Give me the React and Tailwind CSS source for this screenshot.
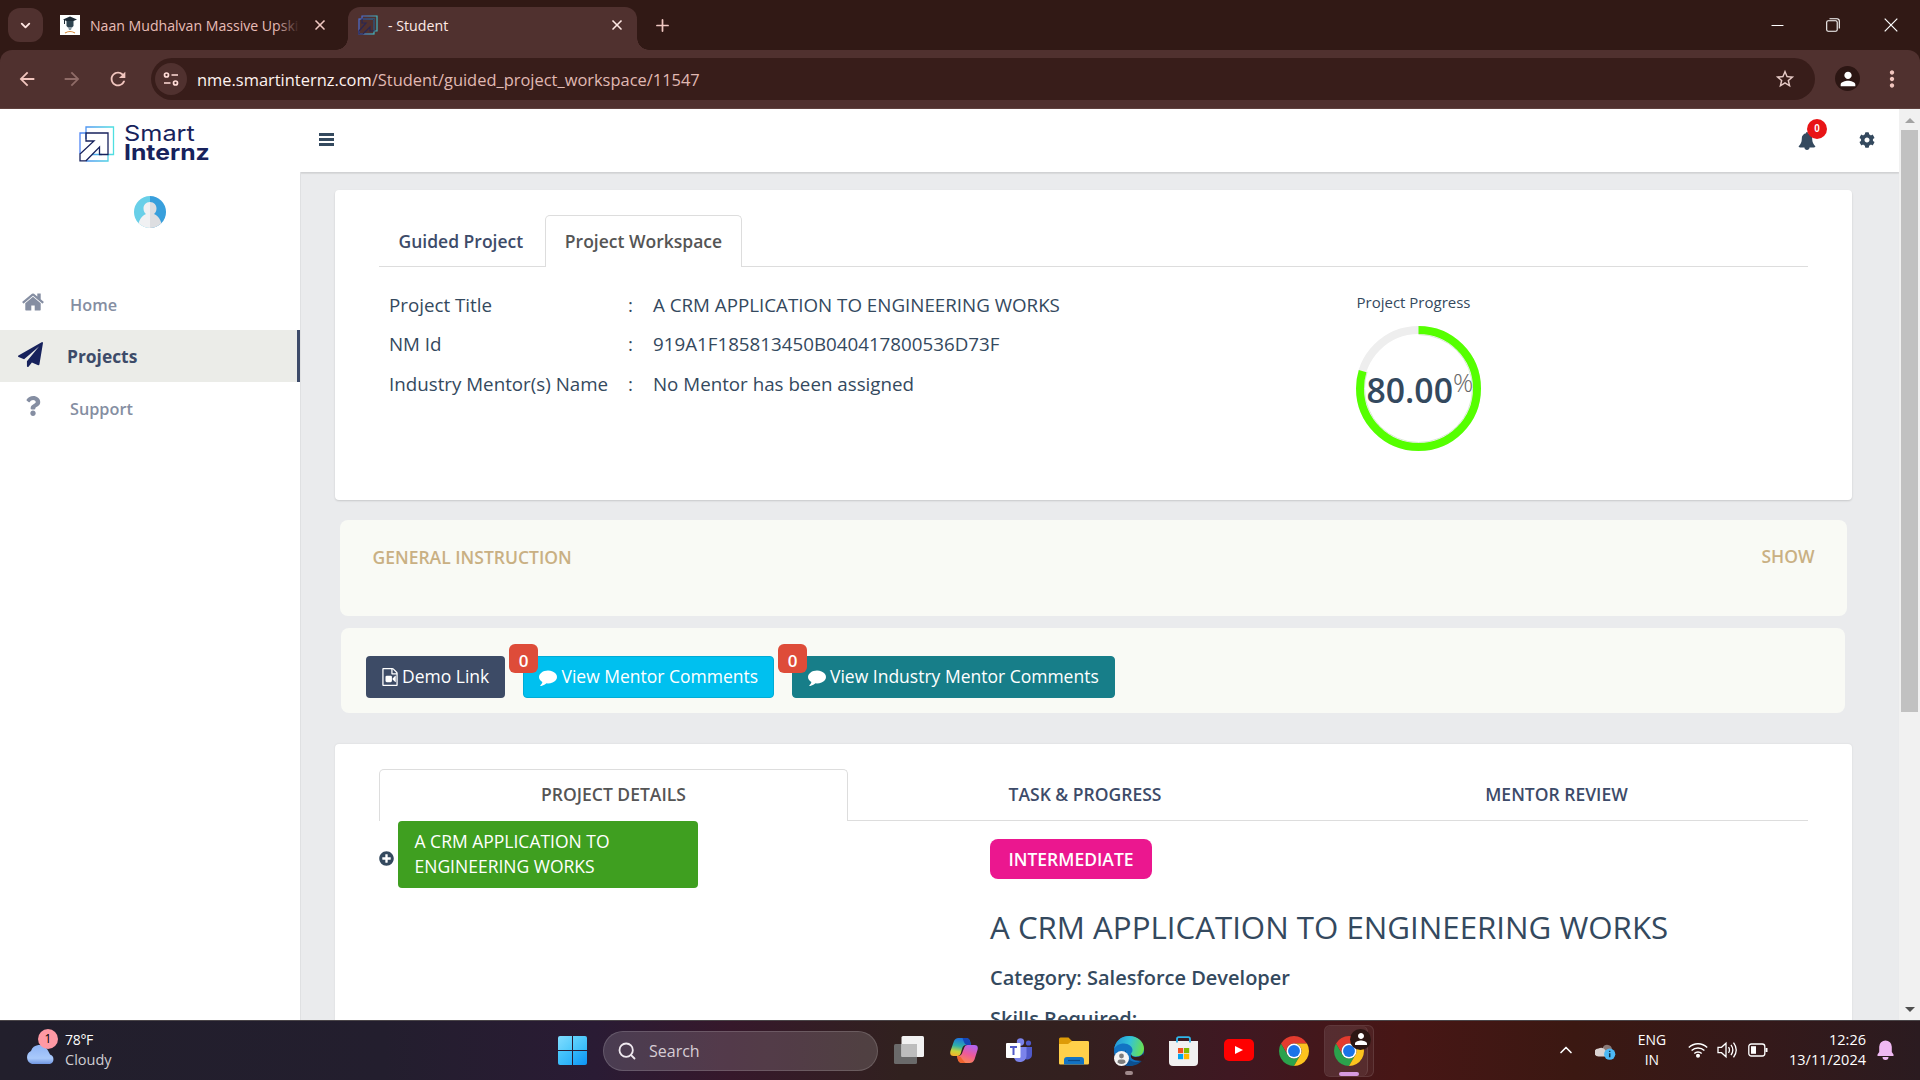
import React from 'react';
import { MdStarBorder, MdPerson, MdArrowBack, MdArrowForward, MdRefresh, MdMoreVert } from 'react-icons/md';
import { FaCog, FaQuestion, FaPlusCircle } from 'react-icons/fa';
import { X, Plus, ChevronDown, ChevronUp, Search, Minus } from 'lucide-react';

const paths = {
  home: 'M1472 992v480q0 26-19 45t-45 19h-384v-384h-256v384h-384q-26 0-45-19t-19-45v-480q0-1 .5-3t.5-3l575-474 575 474q1 2 1 6zm223-69l-62 74q-8 9-21 11h-3q-13 0-21-7l-692-577-692 577q-12 8-24 7-13-2-21-11l-62-74q-8-10-7-23.5t11-21.5l719-599q32-26 76-26t76 26l244 204v-195q0-14 9-23t23-9h192q14 0 23 9t9 23v408l219 182q10 8 11 21.5t-7 23.5z',
  plane: 'M1764 11q33 24 27 64l-256 1536q-5 29-32 45-14 8-31 8-11 0-24-5l-453-185-242 295q-18 23-49 23-13 0-22-4-19-7-30.500-23.500t-11.500-36.500v-349l864-1059-1069 925-395-162q-37-14-40-55-2-40 32-59l1664-960q15-9 32-9 20 0 36 11z',
  comment: 'M1792 896q0 174-120 321.500t-326 233-450 85.500q-70 0-145-8-198 175-460 242-49 14-114 22-17 2-30.500-9t-17.500-29v-1q-3-4-.5-12t2-10 4.500-9.500l6-9 7-8.500 8-9q7-8 31-34.500t34.500-38 31-39.500 32.500-51 27-59 26-76q-157-89-247.500-220t-90.500-281q0-130 71-248.500t191-204.500 286-136.500 348-50.500q244 0 450 85.500t326 233 120 321.500z',
  bell: 'M1728 1408q0 52-38 90t-90 38h-448q0 106-75 181t-181 75-181-75-75-181h-448q-52 0-90-38t-38-90q50-42 91-88t85-119.500 74.500-158.500 50-206 19.500-260q0-152 117-282.500t307-158.500q-8-19-8-39 0-40 28-68t68-28 68 28 28 68q0 20-8 39 190 28 307 158.500t117 282.500q0 139 19.500 260t50 206 74.500 158.500 85 119.500 91 88z',
  video: 'M1596 380q28 28 48 76t20 88v1152q0 40-28 68t-68 28h-1344q-40 0-68-28t-28-68v-1600q0-40 28-68t68-28h896q40 0 88 20t76 48zm-444-244v376h376q-10-29-22-41l-313-313q-12-12-41-22zm384 1528v-1024h-416q-40 0-68-28t-28-68v-416h-768v1536h1280zm-576-896q52 0 90 38t38 90v384q0 52-38 90t-90 38h-384q-52 0-90-38t-38-90v-384q0-52 38-90t90-38h384zm492 2q20 8 20 30v576q0 22-20 30-8 2-12 2-14 0-23-9l-265-266v-90l265-266q9-9 23-9 4 0 12 2z',
};

function Fa({ name, className }) {
  return (
    <svg viewBox="0 0 1792 1792" className={className} fill="currentColor">
      <path d={paths[name]} />
    </svg>
  );
}

/* ---------- Browser frame ---------- */

function TabStrip() {
  return (
    <div className="flex h-[50px] items-start bg-[#311915]">
      <button className="mt-2 ml-2 flex h-[34px] w-[35px] items-center justify-center rounded-xl bg-[#50312f]">
        <ChevronDown className="size-[15px] text-[#ffe6e2]" strokeWidth={3} />
      </button>
      <div className="ml-[17px] flex h-[50px] w-[288px] items-center">
        <svg viewBox="0 0 20 20" className="size-5 shrink-0">
          <rect width="20" height="20" fill="#fff" />
          <path d="M3 4.500 10 1.500l7 3-7 3z" fill="#1d2b36" />
          <path d="M6.500 6h7v5l-1.500 1.500h-4L6.500 11z" fill="#2f4450" />
          <path d="M4.500 5v4" stroke="#1d2b36" strokeWidth="1" />
          <path d="M8 12h4l-1 3h-2z" fill="#8b9aa3" />
          <path d="M5 18q5-3 10 0" stroke="#d58a3d" strokeWidth="1.200" fill="none" />
        </svg>
        <div className="relative mt-[2px] ml-[10px] h-6 w-[210px] overflow-hidden text-[14.100px] leading-6 whitespace-nowrap text-[#e8bdb7]">
          Naan Mudhalvan Massive Upski
          <span className="absolute inset-y-0 right-0 w-6 bg-linear-to-r from-transparent to-[#311915]" />
        </div>
        <X className="ml-[12px] size-[16px] text-[#f0c8c2]" strokeWidth={2.500} />
      </div>
      <div className="relative mt-[7px] flex h-[43px] w-[289px] items-center rounded-t-xl bg-[#50312f] pb-[7px]">
        <span className="absolute bottom-0 -left-3 size-3 bg-[radial-gradient(circle_at_0_0,transparent_11.500px,#50312f_12px)]" />
        <span className="absolute -right-3 bottom-0 size-3 bg-[radial-gradient(circle_at_100%_0,transparent_11.500px,#50312f_12px)]" />
        <svg viewBox="0 0 20 20" className="ml-[10px] size-5 shrink-0" fill="none">
          <defs>
            <linearGradient id="favGrad" x1="0" x2="1">
              <stop offset="0" stopColor="#4b6bd0" />
              <stop offset="1" stopColor="#43b5bd" />
            </linearGradient>
          </defs>
          <rect x="1" y="4" width="15" height="15" stroke="url(#favGrad)" strokeWidth="1.200" />
          <path d="M4 4V1h15v15h-3" stroke="url(#favGrad)" strokeWidth="1.200" />
          <path d="M4 4h12v12h-4v-4l-7 7H1v-3l7-8H4z" stroke="#2a2752" strokeWidth="1.200" />
        </svg>
        <span className="mt-[2px] ml-[10px] w-[221px] text-[14.200px] leading-6 text-[#ffeae6]">- Student</span>
        <X className="size-[16px] text-[#ffe9e5]" strokeWidth={2.500} />
      </div>
      <Plus className="mt-4 ml-4 size-[19px] text-[#f0c8c2]" strokeWidth={2.200} />
      <div className="ml-auto flex h-[50px] items-center text-white">
        <Minus className="mr-[39px] size-[19px]" strokeWidth={1.400} />
        <svg viewBox="0 0 14 14" className="mr-[44px] size-[14px]" fill="none" stroke="currentColor" strokeWidth="1.100">
          <rect x="0.700" y="2.700" width="10.500" height="10.500" rx="1.500" />
          <path d="M3.500.7h7.500q2.300 0 2.300 2.300v7.500" />
        </svg>
        <svg viewBox="0 0 14 14" className="mr-[22px] size-[14px]" stroke="currentColor" strokeWidth="1.200">
          <path d="M.7.7l12.600 12.600M13.300.7L.7 13.300" />
        </svg>
      </div>
    </div>
  );
}

function Toolbar() {
  return (
    <div className="h-[59px] bg-[#311915]">
      <div className="flex h-[59px] items-center rounded-t-xl border-b border-[#5f413e] bg-[#50312f] pb-px text-[#f1c5be]">
        <MdArrowBack className="ml-[16px] size-[22px]" />
        <MdArrowForward className="ml-[23px] size-[22px] text-[#8f6b67]" />
        <MdRefresh className="ml-[24px] size-[22px]" />
        <div className="ml-[22px] flex h-[42px] w-[1664px] items-center rounded-full bg-[#381d1a] text-[16.450px]">
          <span className="ml-[4px] flex size-[32px] items-center justify-center rounded-full bg-[#50312f]">
            <svg viewBox="0 0 16 16" className="size-4 text-[#ffdcd7]" fill="none" stroke="currentColor" strokeWidth="1.700">
              <circle cx="3.500" cy="4" r="2" />
              <path d="M8.500 4H15M1 12h6.500" />
              <circle cx="12.500" cy="12" r="2" />
            </svg>
          </span>
          <span className="mt-[2px] ml-[10px] leading-6 text-[#e0b9b3]">
            <span className="text-[#fff3f0]">nme.smartinternz.com</span>/Student/guided_project_workspace/11547
          </span>
          <MdStarBorder className="mr-[19px] ml-auto size-[22px] text-[#e6cac6]" />
        </div>
        <span className="ml-[20px] flex size-[25px] items-center justify-center rounded-full bg-[#2c1613]">
          <MdPerson className="size-[22px] text-white" />
        </span>
        <MdMoreVert className="ml-[19px] size-[26px]" />
      </div>
    </div>
  );
}

/* ---------- Page ---------- */

function Logo() {
  return (
    <div className="flex items-start text-[#17225c]">
      <svg viewBox="0 0 36 36" className="size-9" fill="none" strokeWidth="1.300">
        <defs>
          <linearGradient id="logoGrad" gradientUnits="userSpaceOnUse" x1="0" x2="36" y1="18" y2="18">
            <stop offset="0" stopColor="#4f83f5" />
            <stop offset="1" stopColor="#4fe3e0" />
          </linearGradient>
        </defs>
        <path d="M7 7V1h27.500v27.500H29M7 7v6M23 28.500H13" stroke="url(#logoGrad)" />
        <path d="M7 7H1v21M7 35h22v-7" stroke="url(#logoGrad)" />
        <path d="M7 7h22v21.500h-8.500V21L7 34.800H1V28l14-13H7z" stroke="currentColor" />
      </svg>
      <div className="-mt-[2px] ml-[9px] font-['Inter',sans-serif] leading-[19px]">
        <div className="w-[64px] origin-left scale-x-[1.150] text-[22px] font-normal">Smart</div>
        <div className="w-[76px] origin-left scale-x-[1.150] text-[21.500px] font-bold">Internz</div>
      </div>
    </div>
  );
}

function Avatar() {
  return (
    <svg viewBox="0 0 32 32" className="size-8">
      <defs>
        <clipPath id="avatarClip">
          <circle cx="16" cy="16" r="16" />
        </clipPath>
      </defs>
      <g clipPath="url(#avatarClip)">
        <rect width="16" height="32" fill="#68cfe8" />
        <rect x="16" width="16" height="32" fill="#389fdc" />
        <path d="M16 6c-4.200 0-6.500 3-6.500 6.500 0 2.500 1 4.300 2.500 5.500C8 20 4.500 23 4 32h12z" fill="#f0f1f3" />
        <path d="M16 6c4.200 0 6.500 3 6.500 6.500 0 2.500-1 4.300-2.500 5.500 4 2 7.500 5 8 14H16z" fill="#dddee1" />
      </g>
    </svg>
  );
}

function Sidebar() {
  return (
    <aside className="flex w-[300px] shrink-0 flex-col bg-white text-[16.250px] font-semibold text-[#858ea2]">
      <div className="mt-[17px] ml-[79px] h-9">
        <Logo />
      </div>
      <div className="mt-[34px] flex justify-center">
        <Avatar />
      </div>
      <a className="mt-[49px] flex h-[53px] items-center">
        <Fa name="home" className="-mt-[4px] ml-[21px] size-[24px]" />
        <span className="mt-[4px] ml-[25px]">Home</span>
      </a>
      <a className="flex h-[52px] items-center border-r-[3px] border-[#3d4b69] bg-[#ebece8] text-[17.400px] font-bold text-[#3d4b69]">
        <Fa name="plane" className="-mt-[4px] ml-[18px] size-[25px] text-[#17225c]" />
        <span className="ml-[24px]">Projects</span>
      </a>
      <a className="flex h-[53px] items-center">
        <FaQuestion className="-mt-[6px] ml-[23px] size-[20px]" />
        <span className="mt-[1px] ml-[27px]">Support</span>
      </a>
    </aside>
  );
}

function Header() {
  return (
    <header className="flex h-[63px] shrink-0 items-center bg-white text-[#34495e] shadow-[0_1px_2px_rgba(0,0,0,0.1)]">
      <div className="mb-[2px] ml-[19px] flex w-[15px] flex-col gap-[2px]">
        <span className="h-[3px] bg-current" />
        <span className="h-[3px] bg-current" />
        <span className="h-[3px] bg-current" />
      </div>
      <div className="relative mr-[43px] ml-auto">
        <Fa name="bell" className="size-[18px]" />
        <span className="absolute -top-[13px] left-[9px] flex size-5 items-center justify-center rounded-full bg-[#e81416] font-['Liberation_Sans',sans-serif] text-[10px] font-bold text-white">
          0
        </span>
      </div>
      <FaCog className="mr-[24px] mb-px size-[16px]" />
    </header>
  );
}

const details = [
  ['Project Title', 'A CRM APPLICATION TO ENGINEERING WORKS'],
  ['NM Id', '919A1F185813450B040417800536D73F'],
  ['Industry Mentor(s) Name', 'No Mentor has been assigned'],
];

function ProgressRing() {
  return (
    <div className="mt-[12px] -ml-px size-[125px] relative">
      <svg viewBox="0 0 125 125" className="size-full -rotate-90" fill="none" strokeWidth="8">
        <circle cx="62.500" cy="62.500" r="58.500" stroke="#eeeeee" />
        <circle cx="62.500" cy="62.500" r="54" stroke="#d9ead2" strokeWidth="1" pathLength="100" strokeDasharray="80 100" />
        <circle cx="62.500" cy="62.500" r="58.500" stroke="#55ff00" pathLength="100" strokeDasharray="79.800 100" />
      </svg>
      <div className="absolute inset-0 flex pl-[11px]">
        <span className="mt-[43px] text-[33.750px] leading-[42px] font-semibold text-[#34495e]">80.00</span>
        <span className="mt-[41px] text-[25px] leading-[30px] font-light text-[#666]">%</span>
      </div>
    </div>
  );
}

function WorkspaceCard() {
  return (
    <section className="mt-[18px] mr-[47px] ml-[35px] h-[310px] shrink-0 rounded bg-white shadow-[0_1px_2px_rgba(0,0,0,0.15)]">
      <nav className="mt-[25px] mr-[44px] ml-[44px] flex h-[52px] border-b border-[#ddd] text-[17.500px] font-semibold">
        <a className="w-[166px] pl-[19.500px] leading-[52px] text-[#3d4b69]">Guided Project</a>
        <a className="-mb-px h-[52px] w-[197px] rounded-t-[5px] border border-b-0 border-[#ddd] bg-white text-center leading-[51px] text-[#555]">
          Project Workspace
        </a>
      </nav>
      <div className="flex">
        <dl className="mt-[18px] ml-[54px] w-[967.500px] text-[18.750px] text-[#34495e]">
          {details.map(([label, value]) => (
            <div key={label} className="flex h-[39.500px] items-center">
              <dt className="w-[239px]">{label}</dt>
              <dd className="w-[25px]">:</dd>
              <dd>{value}</dd>
            </div>
          ))}
        </dl>
        <div className="mt-[24px] text-[15px] text-[#34495e]">
          <div className="leading-[23px]">Project Progress</div>
          <ProgressRing />
        </div>
      </div>
    </section>
  );
}

function Instructions() {
  return (
    <section className="mt-[20px] mr-[52px] ml-[40px] flex h-[96px] shrink-0 justify-between rounded-lg bg-[#f9faf5] px-[32.500px] text-[17.500px] leading-[25px] font-semibold text-[#c9b083]">
      <span className="mt-[25px]">GENERAL INSTRUCTION</span>
      <span className="mt-[24px]">SHOW</span>
    </section>
  );
}

function CountBadge() {
  return (
    <span className="absolute -top-[13px] -left-[15px] flex h-[29px] w-[29px] items-center justify-center rounded-md bg-[#de4c39] pt-[4px] text-[17px] font-semibold">
      0
    </span>
  );
}

function Actions() {
  return (
    <section className="mt-[12px] mr-[54px] ml-[41px] flex h-[85px] shrink-0 items-start rounded-lg bg-[#f9faf5] pt-[28px] pl-[25px] text-[17.500px] whitespace-nowrap text-white">
      <a className="flex h-[42px] w-[139px] items-center rounded bg-[#3d4b66] pl-[15px]">
        <Fa name="video" className="size-[18px]" />
        <span className="ml-[3px] pb-[2px]">Demo Link</span>
      </a>
      <a className="relative ml-[18px] flex h-[42px] w-[251px] items-center rounded border border-[#00acd6] bg-[#00c0ef] pl-[15px]">
        <CountBadge />
        <Fa name="comment" className="size-[18px]" />
        <span className="ml-[4.500px] pb-[2px]">View Mentor Comments</span>
      </a>
      <a className="relative ml-[18px] flex h-[42px] w-[323px] items-center rounded border border-[#177e89] bg-[#177e89] pl-[15px]">
        <CountBadge />
        <Fa name="comment" className="size-[18px]" />
        <span className="ml-[4px] pb-[2px]">View Industry Mentor Comments</span>
      </a>
    </section>
  );
}

function DetailsCard() {
  return (
    <section className="mt-[31px] mr-[47px] ml-[35px] h-[380px] shrink-0 rounded-t bg-white px-[44px] pt-[25px] text-[#34495e] shadow-[0_0_2px_rgba(0,0,0,0.1)]">
      <nav className="flex h-[52px] gap-[3px] border-b border-[#ddd] text-center text-[17.500px] leading-[51px] font-semibold text-[#3d4b69]">
        <a className="-mb-px h-[52px] w-[469px] rounded-t-[5px] border border-b-0 border-[#ddd] bg-white leading-[49px] text-[#555]">PROJECT DETAILS</a>
        <a className="w-[468px]">TASK &amp; PROGRESS</a>
        <a className="w-[469px]">MENTOR REVIEW</a>
      </nav>
      <div className="flex items-start">
        <FaPlusCircle className="mt-[30px] size-[15px]" />
        <div className="ml-[4px] h-[67px] w-[300px] rounded bg-[#3f9f20] pt-[8px] pl-[16.500px] text-[17.500px] leading-[25px] text-white">
          A CRM APPLICATION TO
          <br />
          ENGINEERING WORKS
        </div>
        <div className="ml-[292px] font-semibold">
          <div className="mt-[18px] h-[40px] w-[162px] rounded-lg bg-[#eb178f] text-center text-[17.500px] leading-[40px] text-white">
            INTERMEDIATE
          </div>
          <h2 className="mt-[27px] text-[31.250px] leading-[42px] font-normal">A CRM APPLICATION TO ENGINEERING WORKS</h2>
          <div className="mt-[15px] text-[20px] leading-[30px]">Category: Salesforce Developer</div>
          <div className="mt-[11px] text-[20px] leading-[30px]">Skills Required:</div>
        </div>
      </div>
    </section>
  );
}

function Scrollbar() {
  return (
    <div className="flex w-[21px] shrink-0 flex-col items-center bg-[#f1f1f1]">
      <span className="mt-[9px] border-x-[5px] border-b-[5px] border-x-transparent border-b-[#a3a3a3]" />
      <span className="mt-[7px] h-[582px] w-[17px] bg-[#c1c1c1]" />
      <span className="mt-auto mb-[8px] border-x-[5px] border-t-[5px] border-x-transparent border-t-[#505050]" />
    </div>
  );
}

/* ---------- Taskbar ---------- */

function ChromeIcon() {
  return (
    <svg viewBox="2 2 44 44" className="size-[30px]">
      <path d="M24 13H43.050A22 22 0 0 0 4.950 13L14.470 29.500A11 11 0 0 1 24 13z" fill="#e33b2e" />
      <path d="M14.470 29.500L4.950 13A22 22 0 0 0 24 46L33.530 29.500A11 11 0 0 1 14.470 29.500z" fill="#2ba24c" />
      <path d="M33.530 29.500L24 46A22 22 0 0 0 43.050 13H24A11 11 0 0 1 33.530 29.500z" fill="#fcc31e" />
      <circle cx="24" cy="24" r="11" fill="#fff" />
      <circle cx="24" cy="24" r="8.700" fill="#1a73e8" />
    </svg>
  );
}

function WeatherIcon() {
  return (
    <div className="relative h-[34px] w-[34px]">
      <svg viewBox="0 0 34 34" className="size-full">
        <defs>
          <linearGradient id="cloud" x1="0" x2="0" y1="0" y2="1">
            <stop offset="0" stopColor="#8fb4f5" />
            <stop offset="0.700" stopColor="#a9c9fb" />
            <stop offset="1" stopColor="#6f95e0" />
          </linearGradient>
        </defs>
        <path d="M8 30a7 7 0 0 1-1-13 9 9 0 0 1 16-2q3 5 3 5.500a5 5 0 0 1 0 9.500z" fill="url(#cloud)" />
      </svg>
      <span className="absolute -top-[5px] left-[14px] flex size-5 items-center justify-center rounded-full bg-[#ff99a4] text-[12px] text-black">1</span>
    </div>
  );
}

function TaskViewIcon() {
  return (
    <svg viewBox="0 0 30 28" className="h-[28px] w-[30px]">
      <rect x="0" y="8" width="23" height="20" rx="1.500" fill="#6a6a6a" />
      <rect x="7.500" y="0" width="22.500" height="21" rx="1.500" fill="#f2f2f2" />
      <rect x="7.500" y="8" width="15.500" height="13" fill="#bdbdbd" />
    </svg>
  );
}

function CopilotIcon() {
  return (
    <svg viewBox="0 0 28 27" className="h-[27px] w-[28px]">
      <defs>
        <linearGradient id="cpA" x1="0.500" x2="0.300" y1="0" y2="1">
          <stop offset="0" stopColor="#1d6fe0" />
          <stop offset="0.450" stopColor="#2fb0a8" />
          <stop offset="0.750" stopColor="#c6d53c" />
          <stop offset="1" stopColor="#f4b42a" />
        </linearGradient>
        <linearGradient id="cpB" x1="0.700" x2="0.300" y1="0" y2="1">
          <stop offset="0" stopColor="#b164ee" />
          <stop offset="0.500" stopColor="#ee5a9a" />
          <stop offset="1" stopColor="#fb8a4a" />
        </linearGradient>
      </defs>
      <path d="M16 1q3 0 4 3l1 4h-5q-3 0-4 4l-1.500 5q-.8 2-3 2H3.500Q-.8 19 .5 14L3.800 4.500Q5 1 8.500 1z" fill="url(#cpA)" />
      <path d="M12 26q-3 0-4-3l-1-4q4.500.5 5.500-4l2-5q.8-2 3-2H24.500q4.300 0 3 5l-3 9.500Q23 26 19.500 26z" fill="url(#cpB)" />
      <path d="M12.500 1H16q3 0 4 3l1 4h-4.500q-1.500 0-2.500-3z" fill="#1546b8" />
      <path d="M15.500 26H12q-3 0-4-3l-1-4q4 0 5 3z" fill="#f0642f" />
    </svg>
  );
}

function TeamsIcon() {
  return (
    <svg viewBox="0 0 26 25" className="h-[25px] w-[26px]">
      <circle cx="14.500" cy="4" r="3.700" fill="#7b83eb" />
      <circle cx="22.500" cy="5" r="2.600" fill="#5059c9" />
      <path d="M17 9h9v7.500a5 5 0 0 1-9 3z" fill="#5059c9" />
      <path d="M8 9h12.500v9a6.500 6.500 0 0 1-12.500 2z" fill="#7b83eb" />
      <rect x="0" y="5" width="14.500" height="15" rx="1" fill="#fff" />
      <path d="M4 9h7M7.500 9v8" stroke="#5059c9" strokeWidth="2" />
    </svg>
  );
}

function FolderIcon() {
  return (
    <svg viewBox="0 0 30 28" className="h-[28px] w-[30px]">
      <path d="M0 2q0-1.500 1.500-1.500h8L13 4h15.500Q30 4 30 5.500V12H0z" fill="#dd9b07" />
      <path d="M0 7h9l4-3h15.500Q30 4 30 5.500v20.700q0 1.300-1.300 1.300H1.300Q0 27.500 0 26.200z" fill="#ffd04a" />
      <path d="M5 27.500v-4.500q0-3 3-3h14q3 0 3 3v4.500z" fill="#1273c4" />
      <path d="M9 23.500h12" stroke="#0b4a88" strokeWidth="1.200" />
    </svg>
  );
}

function EdgeIcon() {
  return (
    <svg viewBox="0 0 30 30" className="size-[30px]">
      <defs>
        <linearGradient id="edgeTop" x1="0" x2="1" y1="0.300" y2="0.500">
          <stop offset="0" stopColor="#2494d8" />
          <stop offset="0.500" stopColor="#33c3d8" />
          <stop offset="1" stopColor="#6ae04f" />
        </linearGradient>
      </defs>
      <circle cx="15" cy="15" r="15" fill="#1273c4" />
      <path d="M0 14C1 5 7 0 15 0c9 0 15 6 15 12.500 0 5-3.500 8-8 8-3 0-5-1-5-2.500 0-1 1.500-1.500 1.500-4 0-3.500-4-6.500-8.500-6.500C5 7.500 1 10 0 14z" fill="url(#edgeTop)" />
      <path d="M12 14c-2 7 4 12 10 12 3 0 5-1 6-1.500C25 28.500 20 30 15 30 9 30 8 18 12 14z" fill="#0c4f8f" />
      <path d="M17.500 17.500c-1 2 1.500 3.500 4.500 3.500 3.500 0 6-1.500 7.500-4L30 23l-2 1.500c-8 1-13-2-10.500-7z" fill="#38191a" />
      <circle cx="7.500" cy="22.500" r="7.500" fill="#f4f4f4" />
      <circle cx="7.500" cy="20" r="2.400" fill="#7d7d7d" />
      <path d="M3.500 26.500q0-3 2.500-3h3q2.500 0 2.500 3-2 1.500-4 1.500t-4-1.500z" fill="#7d7d7d" />
    </svg>
  );
}

function StoreIcon() {
  return (
    <svg viewBox="0 0 29 30" className="h-[30px] w-[29px]">
      <path d="M8 7V3q0-1.800 1.800-1.800h9.400Q21 1.200 21 3v4" fill="none" stroke="#2fb6ea" strokeWidth="1.800" />
      <path d="M0 5h29v21q0 4-4 4H4q-4 0-4-4z" fill="#f1f1f1" />
      <path d="M8 5v1.500M21 5v1.500" stroke="#2fb6ea" strokeWidth="1.800" />
      <rect x="9" y="12" width="5.200" height="5.200" fill="#f25022" />
      <rect x="15" y="12" width="5.200" height="5.200" fill="#7fba00" />
      <rect x="9" y="18" width="5.200" height="5.200" fill="#00a4ef" />
      <rect x="15" y="18" width="5.200" height="5.200" fill="#ffb900" />
    </svg>
  );
}

function Taskbar() {
  return (
    <footer className="flex h-[60px] items-center border-t border-[#4a4548] bg-[linear-gradient(90deg,#221f2c_0%,#231e2e_20%,#2a1b34_31%,#36182b_38%,#31211f_47%,#33201f_56%,#3f1822_64%,#471615_73%,#3b1812_82%,#34191a_92%,#2b1b20_100%)] text-white">
      <div className="ml-[24px]">
        <WeatherIcon />
      </div>
      <div className="mb-[2px] ml-[7px] w-[60px] text-[14px] leading-[20px]">
        <div>
          <span className="tracking-[-0.300px]">78°F</span>
        </div>
        <div className="text-[14.500px] text-[#cfcdd2]">Cloudy</div>
      </div>
      <div className="ml-[433px] grid size-[29px] grid-cols-2 gap-[1px]">
        <span className="rounded-tl-[2px] bg-linear-to-br from-[#7fdcff] to-[#4cc9fb]" />
        <span className="rounded-tr-[2px] bg-linear-to-br from-[#62d3fd] to-[#33b9f8]" />
        <span className="rounded-bl-[2px] bg-linear-to-br from-[#4cc9fb] to-[#27aef8]" />
        <span className="rounded-br-[2px] bg-linear-to-br from-[#33b9f8] to-[#0b94f5]" />
      </div>
      <div className="ml-[16px] flex h-[40px] w-[275px] items-center rounded-full border border-white/15 bg-white/15">
        <Search className="ml-[13px] size-[20px] text-[#efe9ef]" strokeWidth={2.200} />
        <span className="ml-[12px] text-[16px] text-[#d6cdd5]">Search</span>
      </div>
      <div className="mb-px ml-[16px]"><TaskViewIcon /></div>
      <div className="mb-px ml-[26px]"><CopilotIcon /></div>
      <div className="mb-px ml-[28px]"><TeamsIcon /></div>
      <div className="ml-[27px]"><FolderIcon /></div>
      <div className="relative ml-[25px]">
        <EdgeIcon />
        <span className="absolute -bottom-[9px] left-[11px] h-[4px] w-[8px] rounded-full bg-[#a0898b]" />
      </div>
      <div className="ml-[25px]"><StoreIcon /></div>
      <div className="mb-px ml-[26px] flex h-[22px] w-[30px] items-center justify-center rounded-[5px] bg-[#f00]">
        <span className="border-y-[4.500px] border-l-[8px] border-y-transparent border-l-white" />
      </div>
      <div className="ml-[25px]"><ChromeIcon /></div>
      <div className="ml-[15px] flex h-[52px] w-[50px] rounded-md border border-white/10 bg-white/5">
        <div className="relative flex w-[43px] items-center rounded-md border-r border-white/10 bg-white/5 pl-[9px]">
          <ChromeIcon />
          <span className="absolute top-[3px] left-[25px] flex size-[21px] items-center justify-center rounded-full bg-[#2c1613]">
            <MdPerson className="size-[18px]" />
          </span>
          <span className="absolute bottom-0 left-[14px] h-[4px] w-[20px] rounded-full bg-[#d79be0]" />
        </div>
      </div>
      <div className="mr-[26px] mb-px ml-auto flex items-center">
        <ChevronUp className="size-[20px]" strokeWidth={2} />
        <svg viewBox="0 0 21 17" className="mt-[3px] ml-[19px] h-[17px] w-[21px]">
          <path d="M8 4a5 5 0 0 1 9 2v7H6z" fill="#8b7a78" />
          <path d="M3.500 13.500a4 4 0 0 1 0-8Q8 3 11 8l4 5.500z" fill="#d9d2d1" />
          <circle cx="14.700" cy="11.200" r="5.600" fill="#4cb8f5" />
          <path d="M14.700 10.200v4M14.700 7.700v1.400" stroke="#12344a" strokeWidth="1.500" />
        </svg>
        <div className="ml-[22px] text-center text-[13.900px] leading-[20px]">
          ENG
          <br />
          IN
        </div>
        <svg viewBox="0 0 20 16" className="ml-[22px] h-[16px] w-[20px]" fill="none" stroke="currentColor" strokeWidth="1.400">
          <path d="M.8 5.500a13 13 0 0 1 18.400 0M3.600 8.600a9 9 0 0 1 12.800 0M6.300 11.600a5.200 5.200 0 0 1 7.400 0" />
          <circle cx="10" cy="13.800" r="1.300" fill="currentColor" />
        </svg>
        <svg viewBox="0 0 21 18" className="ml-[9px] h-[18px] w-[21px]" fill="none" stroke="currentColor" strokeWidth="1.300">
          <path d="M1 6.300h3.500L9 2.200v13.600l-4.500-4.100H1z" />
          <path d="M11.500 6.200q2 2.800 0 5.600M14 3.900q3.700 5.100 0 10.200M16.500 1.700q5.500 7.300 0 14.600" />
        </svg>
        <svg viewBox="0 0 20 14" className="ml-[10px] h-[14px] w-[20px]" fill="none" stroke="currentColor" strokeWidth="1.300">
          <rect x=".8" y="1" width="16" height="12" rx="2.500" />
          <rect x="3" y="3.200" width="5" height="7.600" fill="currentColor" stroke="none" />
          <path d="M18.500 5v4" strokeWidth="2" />
        </svg>
        <div className="ml-[21px] text-right text-[14.500px] leading-[20px]">
          12:26
          <br />
          13/11/2024
        </div>
        <svg viewBox="0 0 17 20" className="ml-[11px] h-[20px] w-[17px]" fill="#efb8f2">
          <path d="M8.500.5a6.300 6.300 0 0 0-6.300 6.300V12L.5 14.500V16h16v-1.500L14.800 12V6.800A6.300 6.300 0 0 0 8.500.5zM5.500 17h6a3 3 0 0 1-6 0z" />
        </svg>
      </div>
    </footer>
  );
}

export default function App() {
  return (
    <div className="flex h-[1080px] w-[1920px] flex-col overflow-hidden font-['Open_Sans',sans-serif]">
      <TabStrip />
      <Toolbar />
      <div className="flex h-[911px] overflow-hidden">
        <Sidebar />
        <main className="flex h-full flex-1 flex-col overflow-hidden bg-[#eaebed]">
          <Header />
          <div className="flex flex-1 flex-col shadow-[inset_1px_0_0_#dfe0e2,inset_0_2px_1px_rgba(0,0,0,0.04)]">
            <WorkspaceCard />
            <Instructions />
            <Actions />
            <DetailsCard />
          </div>
        </main>
        <Scrollbar />
      </div>
      <Taskbar />
    </div>
  );
}
